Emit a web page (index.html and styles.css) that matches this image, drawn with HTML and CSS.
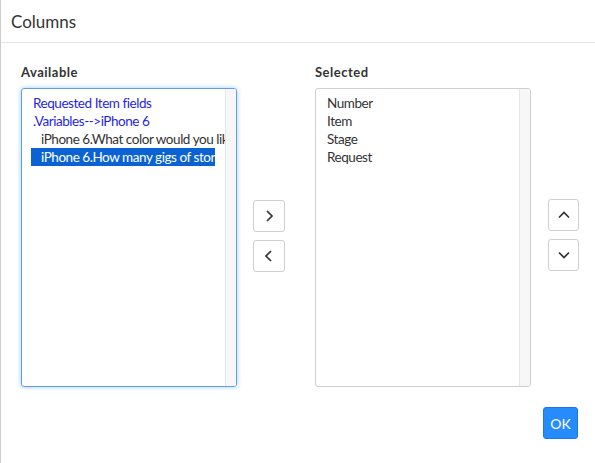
FILE: index.html
```html
<!DOCTYPE html>
<html lang="en">
<head>
    <meta charset="UTF-8">
    <meta name="viewport" content="width=device-width, initial-scale=1.0">
    <title>Columns</title>
    <link rel="stylesheet" href="styles.css">
</head>
<body>
    <div class="dialog">
        <!-- Header -->
        <div class="dialog-header">
            <h1>Columns</h1>
        </div>

        <!-- Body -->
        <div class="dialog-body">
            <div class="column">
                <label class="col-label">Available</label>
                <div class="listbox focused">
                    <div class="list-items">
                        <div class="group-label">Requested Item fields</div>
                        <div class="group-label">.Variables--&gt;iPhone 6</div>
                        <div class="option">iPhone 6.What color would you like?</div>
                        <div class="option selected">iPhone 6.How many gigs of storage?</div>
                    </div>
                    <div class="scroll-track"></div>
                </div>
            </div>

            <div class="move-buttons">
                <button class="icon-btn" title="Add">
                    <svg width="14" height="14" viewBox="0 0 14 14"><path d="M5 2 L10 7 L5 12" fill="none" stroke="#333" stroke-width="1.7"/></svg>
                </button>
                <button class="icon-btn" title="Remove">
                    <svg width="14" height="14" viewBox="0 0 14 14"><path d="M9 2 L4 7 L9 12" fill="none" stroke="#333" stroke-width="1.7"/></svg>
                </button>
            </div>

            <div class="column">
                <label class="col-label">Selected</label>
                <div class="listbox">
                    <div class="list-items">
                        <div class="plain">Number</div>
                        <div class="plain">Item</div>
                        <div class="plain">Stage</div>
                        <div class="plain">Request</div>
                    </div>
                    <div class="scroll-track"></div>
                </div>
            </div>

            <div class="move-buttons order-buttons">
                <button class="icon-btn" title="Up">
                    <svg width="14" height="14" viewBox="0 0 14 14"><path d="M2 9.5 L7 4.5 L12 9.5" fill="none" stroke="#333" stroke-width="1.7"/></svg>
                </button>
                <button class="icon-btn" title="Down">
                    <svg width="14" height="14" viewBox="0 0 14 14"><path d="M2 4.5 L7 9.5 L12 4.5" fill="none" stroke="#333" stroke-width="1.7"/></svg>
                </button>
            </div>
        </div>

        <div class="dialog-footer">
            <button class="btn-ok">OK</button>
        </div>
    </div>
</body>
</html>
```

FILE: styles.css
```css
body {
    margin: 0;
    font-family: Lato, "Open Sans", sans-serif;
    background-color: #fff;
    color: #333;
}
.dialog {
    height: 463px;
    border-left: 1px solid #cfcfcf;
    box-sizing: border-box;
}
.dialog-header {
    height: 43px;
    border-bottom: 1px solid #e5e5e5;
    box-sizing: border-box;
    padding: 0 10px;
    display: flex;
    align-items: center;
}
.dialog-header h1 {
    margin: 0;
    font-size: 17px;
    font-weight: normal;
    color: #333;
}
.dialog-body {
    display: flex;
    align-items: flex-start;
    padding: 21px 0 0 20px;
}
.column {
    display: flex;
    flex-direction: column;
}
.col-label {
    font-size: 13px;
    font-weight: bold;
    letter-spacing: 0.5px;
    color: #333;
    height: 16px;
    line-height: 16px;
    margin-bottom: 8px;
}
.listbox {
    display: flex;
    width: 216px;
    height: 299px;
    border: 1px solid #cfcfcf;
    border-radius: 3px;
    box-sizing: border-box;
    overflow: hidden;
    font-size: 13.5px;
    letter-spacing: -0.45px;
}
.listbox.focused {
    border-color: #5aa0ee;
    box-shadow: 0 0 5px rgba(90, 160, 238, 0.55);
}
.list-items {
    flex: 1;
    min-width: 0;
    overflow: hidden;
    padding: 5px 0 0 9px;
    line-height: 18px;
    white-space: nowrap;
}
.scroll-track {
    flex: none;
    width: 10px;
    background-color: #f7f7f7;
    border-left: 1px solid #e6e6e6;
}
.group-label {
    color: #1f1fe8;
    padding-left: 2px;
}
.option {
    padding-left: 10px;
    color: #333;
    overflow: hidden;
}
.option.selected {
    background-color: #0b63d3;
    color: #fff;
    width: 174px;
}
.plain {
    padding-left: 2px;
    color: #333;
}
.move-buttons {
    display: flex;
    flex-direction: column;
    gap: 8px;
    margin: 136px 30px 0 16px;
}
.order-buttons {
    margin: 135px 0 0 17px;
}
.icon-btn {
    width: 32px;
    height: 32px;
    padding: 0;
    background-color: #fff;
    border: 1px solid #cfcfcf;
    border-radius: 3px;
    display: flex;
    align-items: center;
    justify-content: center;
    cursor: pointer;
}
.order-buttons .icon-btn {
    width: 31px;
}
.dialog-footer {
    display: flex;
    justify-content: flex-end;
    padding: 20px 17px 0 0;
}
.btn-ok {
    width: 35px;
    height: 32px;
    padding: 0;
    background-color: #278cfb;
    border: 1px solid #1a78e0;
    border-radius: 3px;
    color: #fff;
    font-family: Lato, "Open Sans", sans-serif;
    font-size: 14px;
    cursor: pointer;
}
```
